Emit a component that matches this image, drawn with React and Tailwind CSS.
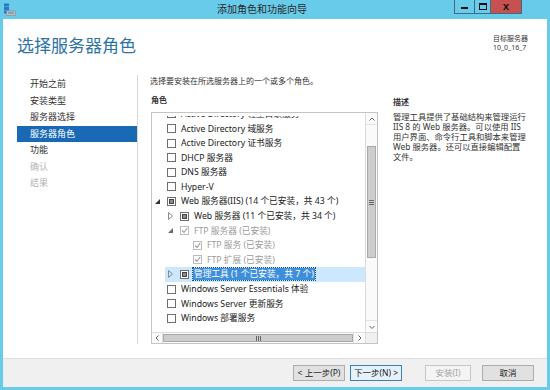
import React from 'react';

const NAV = [
  { label: '开始之前' },
  { label: '安装类型' },
  { label: '服务器选择' },
  { label: '服务器角色', active: true },
  { label: '功能' },
  { label: '确认', disabled: true },
  { label: '结果', disabled: true },
];

const ROLES = [
  { label: 'Active Directory 轻型目录服务', level: 0 },
  { label: 'Active Directory 域服务', level: 0 },
  { label: 'Active Directory 证书服务', level: 0 },
  { label: 'DHCP 服务器', level: 0 },
  { label: 'DNS 服务器', level: 0 },
  { label: 'Hyper-V', level: 0 },
  { label: 'Web 服务器(IIS) (14 个已安装，共 43 个)', level: 0, box: 'partial', arrow: 'open' },
  { label: 'Web 服务器 (11 个已安装，共 34 个)', level: 1, box: 'partial', arrow: 'closed' },
  { label: 'FTP 服务器 (已安装)', level: 1, box: 'checked', arrow: 'open', muted: true },
  { label: 'FTP 服务 (已安装)', level: 2, box: 'checked', muted: true },
  { label: 'FTP 扩展 (已安装)', level: 2, box: 'checked', muted: true },
  { label: '管理工具 (1 个已安装，共 7 个)', level: 1, box: 'partial', arrow: 'closed', selected: true },
  { label: 'Windows Server Essentials 体验', level: 0 },
  { label: 'Windows Server 更新服务', level: 0 },
  { label: 'Windows 部署服务', level: 0 },
];

const INDENT = [ 'w-0', 'w-[13px]', 'w-[26px]' ];

function Arrow( { kind, muted } ) {
  if ( kind === 'open' ) {
    return (
      <svg width="5" height="5" viewBox="0 0 5 5">
        <polygon points="5,0 5,5 0,5" fill={ muted ? '#6b6b6b' : '#333' } />
      </svg>
    );
  }
  if ( kind === 'closed' ) {
    return (
      <svg width="5" height="8" viewBox="0 0 5 8">
        <polygon points="0.5,0.5 4.5,4 0.5,7.5" fill="none" stroke="#8a8a8a" strokeWidth="1" />
      </svg>
    );
  }
  return null;
}

function Checkbox( { state } ) {
  if ( state === 'checked' ) {
    return (
      <span className="flex h-[9px] w-[9px] shrink-0 items-center justify-center border border-[#bcbcbc] bg-white">
        <svg width="7" height="7" viewBox="0 0 7 7">
          <polyline points="1,3.5 3,5.5 6.2,1" fill="none" stroke="#9a9a9a" strokeWidth="1.1" />
        </svg>
      </span>
    );
  }
  return (
    <span className="flex h-[9px] w-[9px] shrink-0 items-center justify-center border border-[#6e6e6e] bg-white">
      { state === 'partial' && <span className="h-[5px] w-[5px] border border-[#444] bg-[#8c8c8c]" /> }
    </span>
  );
}

function Chevron( { dir } ) {
  const pts = {
    up: '0.5,3.5 3,1 5.5,3.5',
    down: '0.5,1 3,3.5 5.5,1',
  };
  if ( dir === 'left' || dir === 'right' ) {
    return (
      <svg width="4" height="6" viewBox="0 0 4 6">
        <polyline points={ dir === 'left' ? '3.5,0.5 1,3 3.5,5.5' : '0.5,0.5 3,3 0.5,5.5' } fill="none" stroke="#606060" strokeWidth="1" />
      </svg>
    );
  }
  return (
    <svg width="6" height="4" viewBox="0 0 6 4">
      <polyline points={ pts[ dir ] } fill="none" stroke="#606060" strokeWidth="1" />
    </svg>
  );
}

function RoleRow( { role } ) {
  return (
    <div className="flex h-[14.6px] shrink-0">
      <div className={ `${ INDENT[ role.level ] } shrink-0` } />
      <div className={ `flex flex-1 items-center pl-[3px] ${ role.selected ? 'bg-[#cce8ff]' : '' }` }>
        <span className="flex w-[12px] shrink-0 items-center">
          <Arrow kind={ role.arrow } muted={ role.muted } />
        </span>
        <Checkbox state={ role.box } />
        <span
          className={ `ml-[4px] whitespace-nowrap px-[1px] leading-[12px] ${
            role.selected ? 'bg-[#3d8fdb] text-white outline-1 outline-dotted outline-[#1c4f86]' : role.muted ? 'text-[#9b9b9b]' : 'text-[#222]'
          }` }
        >
          { role.label }
        </span>
      </div>
    </div>
  );
}

function ServerIcon() {
  return (
    <svg width="13" height="13" viewBox="0 0 13 13">
      <rect x="1" y="0.5" width="5" height="3" fill="#2c78c8" />
      <rect x="1" y="4" width="5" height="3" fill="#2c78c8" />
      <rect x="1" y="7.5" width="5" height="3" fill="#2c78c8" />
      <rect x="3.5" y="8" width="9" height="4.5" rx="0.5" fill="#b7c3cc" stroke="#7d8a94" strokeWidth="0.6" />
      <rect x="5" y="9.5" width="6" height="1" fill="#6e7b86" />
    </svg>
  );
}

export default function App() {
  return (
    <div className="flex h-[390px] w-[550px] flex-col bg-[#68cbea] font-['Noto_Sans','Noto_Sans_CJK_SC',sans-serif] text-[#222]">
      {/* title bar */}
      <div className="flex h-[19px] shrink-0 items-start">
        <div className="ml-[3px] mt-[3px] flex">
          <ServerIcon />
        </div>
        <div className="ml-[201px] mt-[3px] text-[10px] leading-[13px] text-[#2a2a2a]">添加角色和功能向导</div>
        <div className="ml-auto mr-[28px] flex h-[14px]">
          <div className="flex w-[20px] items-end justify-center border-b border-l border-[#3f6c82] pb-[4px]">
            <span className="h-[2px] w-[7px] bg-[#111]" />
          </div>
          <div className="flex w-[16px] items-center justify-center border-b border-l border-[#3f6c82]">
            <span className="h-[7px] w-[8px] border border-t-2 border-[#111]" />
          </div>
          <div className="flex w-[32px] items-center justify-center border-b border-l border-r border-[#3f6c82] bg-[#c75050] text-[9px] font-bold leading-none text-[#111]">
            X
          </div>
        </div>
      </div>

      {/* client */}
      <div className="mx-[3px] mb-[3px] flex flex-1 flex-col bg-white">
        {/* header */}
        <div className="flex h-[51px] shrink-0 items-start justify-between">
          <h1 className="ml-[14px] mt-[16px] text-[17px] font-normal leading-[22px] text-[#2d73a3]">选择服务器角色</h1>
          <div className="mr-[19px] mt-[15px] w-[35px] text-[7px] leading-[9px] text-[#333]">
            <div className="whitespace-nowrap">目标服务器</div>
            <div className="whitespace-nowrap">10_0_16_7</div>
          </div>
        </div>

        {/* body */}
        <div className="flex h-[288px] shrink-0 items-start">
          <nav className="mt-[5px] h-[269px] w-[135px] shrink-0 border-r border-[#d6d6d6] pl-[14px] pt-[1px]">
            { NAV.map( ( item ) => (
              <div
                key={ item.label }
                className={ `h-[16.5px] pl-[13px] text-[9px] leading-[16.5px] ${
                  item.active ? 'bg-[#1a69b5] text-white' : item.disabled ? 'text-[#b4b4b4]' : 'text-[#333]'
                }` }
              >
                { item.label }
              </div>
            ) ) }
          </nav>

          <div className="flex-1 pl-[12px] pt-[5px]">
            <p className="h-[12px] whitespace-nowrap text-[8px] leading-[12px] text-[#333]">选择要安装在所选服务器上的一个或多个角色。</p>

            <div className="mt-[3px] flex">
              <div className="ml-[1px] w-[227px] shrink-0">
                <div className="mt-[4px] h-[12px] text-[8px] font-bold leading-[12px] text-[#333]">角色</div>
                <div className="mt-[6px] flex h-[232px] flex-col border border-[#c4c4c4]">
                  <div className="flex h-[219px]">
                    <div className="flex flex-1 flex-col pt-[3px] text-[8.7px]">
                      <div className="flex-1 overflow-hidden">
                        <div className="mt-[-9.4px] flex flex-col">
                          { ROLES.map( ( role ) => <RoleRow key={ role.label } role={ role } /> ) }
                        </div>
                      </div>
                    </div>
                    {/* vertical scrollbar */}
                    <div className="flex w-[12px] shrink-0 flex-col border-l border-[#dcdcdc] bg-[#fafafa]">
                      <div className="flex h-[12px] items-center justify-center border-b border-[#e2e2e2]">
                        <Chevron dir="up" />
                      </div>
                      <div className="h-[21px]" />
                      <div className="mx-[1px] flex h-[112px] items-center justify-center border border-[#a9a9a9] bg-[#cdcdcd]">
                        <div className="flex flex-col gap-[1px]">
                          <span className="h-px w-[5px] bg-[#666]" />
                          <span className="h-px w-[5px] bg-[#666]" />
                          <span className="h-px w-[5px] bg-[#666]" />
                        </div>
                      </div>
                      <div className="flex-1" />
                      <div className="flex h-[12px] items-center justify-center border-t border-[#e2e2e2]">
                        <Chevron dir="down" />
                      </div>
                    </div>
                  </div>
                  {/* horizontal scrollbar */}
                  <div className="flex h-[11px] border-t border-[#dcdcdc] bg-[#fafafa]">
                    <div className="flex w-[11px] items-center justify-center border-r border-[#e2e2e2]">
                      <Chevron dir="left" />
                    </div>
                    <div className="my-[1px] flex flex-1 items-center justify-center border border-[#a9a9a9] bg-[#cdcdcd]">
                      <div className="flex gap-[1px]">
                        <span className="h-[5px] w-px bg-[#666]" />
                        <span className="h-[5px] w-px bg-[#666]" />
                        <span className="h-[5px] w-px bg-[#666]" />
                      </div>
                    </div>
                    <div className="flex w-[12px] items-center justify-center border-l border-[#e2e2e2]">
                      <Chevron dir="right" />
                    </div>
                    <div className="w-[12px] border-l border-[#dcdcdc] bg-[#f0f0f0]" />
                  </div>
                </div>
              </div>

              <div className="ml-[15px] w-[140px]">
                <div className="mt-[5.5px] h-[12px] text-[8px] font-bold leading-[12px] text-[#333]">描述</div>
                <div className="mt-[4px] whitespace-nowrap text-[8.3px] leading-[10px] text-[#333]">
                  管理工具提供了基础结构来管理运行
                  <br />
                  IIS 8 的 Web 服务器。可以使用 IIS
                  <br />
                  用户界面、命令行工具和脚本来管理
                  <br />
                  Web 服务器。还可以直接编辑配置
                  <br />
                  文件。
                </div>
              </div>
            </div>
          </div>
        </div>

        {/* footer */}
        <div className="flex flex-1 items-center justify-end border-t border-[#dfdfdf] bg-[#f0f0f0] pr-[13px] text-[8.5px]">
          <button className="h-[16px] w-[52px] border border-[#adadad] bg-[#e1e1e1] leading-[14px] text-[#222]">&lt; 上一步(P)</button>
          <button className="ml-[5px] h-[16px] w-[52px] border border-[#3c7fb1] bg-[#e5f1fb] leading-[14px] text-[#222]">下一步(N) &gt;</button>
          <button className="ml-[23px] h-[16px] w-[46px] border border-[#c6c6c6] bg-[#f4f4f4] leading-[14px] text-[#a3a3a3]">安装(I)</button>
          <button className="ml-[11px] h-[16px] w-[52px] border border-[#adadad] bg-[#e1e1e1] leading-[14px] text-[#222]">取消</button>
        </div>
      </div>
    </div>
  );
}
